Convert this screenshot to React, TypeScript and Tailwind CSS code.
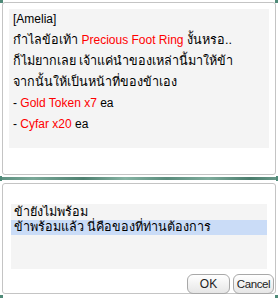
const font = { fontFamily: '"Liberation Sans", "Noto Sans", sans-serif' }

function Corner({ className }: { className: string }) {
  return <div className={`absolute h-[3px] w-[3px] bg-[#4f8a78] ${className}`} />
}

// thai glyphs fall back to a narrower face, bump them a little
function Th({ children }: { children: React.ReactNode }) {
  return <span className="text-[12.6px]">{children}</span>
}

export default function App() {
  return (
    <div className="relative h-[298px] w-[278px] overflow-hidden bg-white text-[12px] text-black" style={font}>
      <Corner className="left-0 top-0" />
      <Corner className="right-0 top-0" />
      <Corner className="bottom-0 left-0" />
      <Corner className="bottom-0 right-0" />

      {/* message panel */}
      <div className="mx-[2px] mt-[2px] h-[173px] rounded-[3px] border border-[#c4c4c4] bg-white px-[6px] pt-[6px]">
        <div className="h-[139px] bg-[#f4f4f4] pl-[4px] leading-[21px]">
          <div>[Amelia]</div>
          <div>
            <Th>กำไลข้อเท้า </Th>
            <span className="text-[#ff0000]">Precious Foot Ring</span> <Th>งั้นหรอ..</Th>
          </div>
          <div>
            <Th>ก็ไม่ยากเลย เจ้าแค่นำของเหล่านี้มาให้ข้า</Th>
          </div>
          <div>
            <Th>จากนั้นให้เป็นหน้าที่ของข้าเอง</Th>
          </div>
          <div>
            - <span className="text-[#ff0000]">Gold Token x7</span> ea
          </div>
          <div>
            - <span className="text-[#ff0000]">Cyfar x20</span> ea
          </div>
        </div>
      </div>

      {/* separator */}
      <div className="relative mt-[2px] h-[3px] w-full bg-[linear-gradient(90deg,#5d9080,#7aa898_12%,#4e8070_30%,#86b4a4_45%,#5a8c7c_60%,#7eac9c_75%,#4a7c6c_90%,#6a9a8a)]">
        <div className="absolute right-0 top-[-1px] h-[5px] w-[2px] bg-[#4f8a78]" />
        <div className="absolute left-0 top-[-1px] h-[5px] w-[2px] bg-[#4f8a78]" />
      </div>

      {/* reply panel */}
      <div className="mx-[2px] mt-[3px] h-[111px] rounded-[3px] border border-[#c4c4c4] bg-white px-[8px] pt-[20px]">
        <div className="h-[65px] bg-[#f4f4f4]">
          <div className="h-4 pl-[3px] leading-4">
            <Th>ข้ายังไม่พร้อม</Th>
          </div>
          <div className="h-[15px] bg-[#cadcf7] pl-[3px] leading-[15px]">
            <Th>ข้าพร้อมแล้ว นี่คือของที่ท่านต้องการ</Th>
          </div>
        </div>
        <div className="mr-[-7px] mt-[5px] flex justify-end gap-[3px]">
          <button className="h-5 w-[43px] rounded-[6px] border border-[#a8a8a8] bg-[linear-gradient(#ffffff,#e6e6e6)] text-[12px] leading-[18px] text-[#222]">
            OK
          </button>
          <button className="h-5 w-[41px] rounded-[6px] border border-[#a8a8a8] bg-[linear-gradient(#ffffff,#e6e6e6)] text-[11.5px] leading-[18px] tracking-[-0.4px] text-[#222]">
            Cancel
          </button>
        </div>
      </div>
    </div>
  )
}
